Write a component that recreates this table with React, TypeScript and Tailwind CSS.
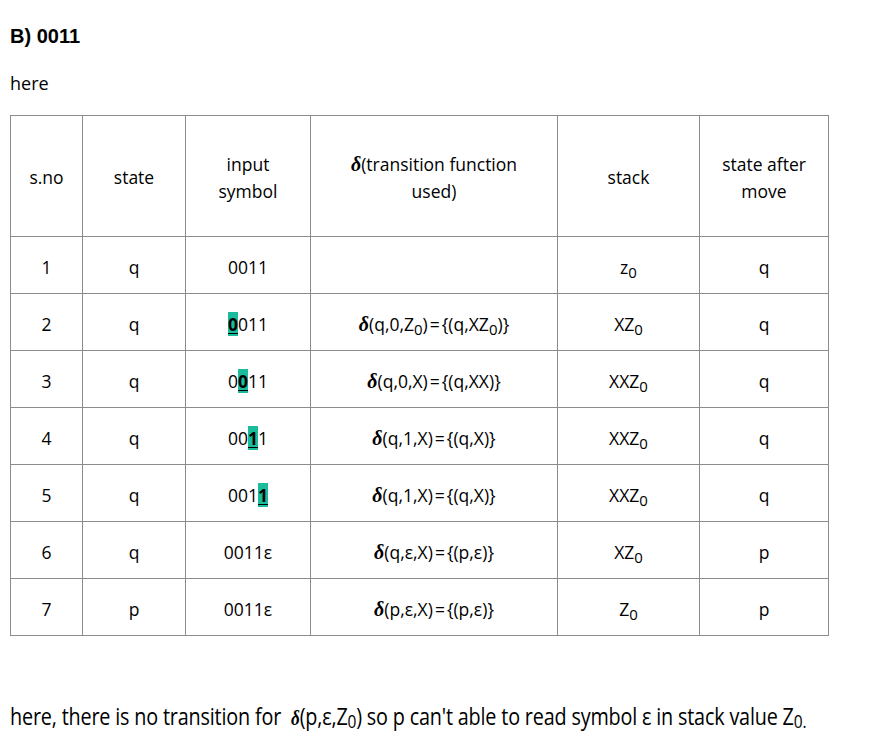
import * as React from "react";

const Delta = () => (
  <span className="font-['Liberation_Serif',serif] font-bold italic text-[20px]">δ</span>
);

const Sub = ({ children, big }: { children: React.ReactNode; big?: boolean }) => (
  <sub className={big ? "relative top-[3px] text-[18px]" : "relative top-[4px] text-[15px]"}>{children}</sub>
);

const Eq = () => <span className="mx-[2px]">=</span>;

const Hl = ({ children }: { children: React.ReactNode }) => (
  <span className="bg-[#1abc9c] font-bold underline underline-offset-2">{children}</span>
);

type Row = {
  no: string;
  state: string;
  input: React.ReactNode;
  fn: React.ReactNode;
  stack: React.ReactNode;
  after: string;
};

const rows: Row[] = [
  { no: "1", state: "q", input: "0011", fn: null, stack: <>z<Sub>0</Sub></>, after: "q" },
  {
    no: "2",
    state: "q",
    input: <><Hl>0</Hl>011</>,
    fn: <><Delta />(q,0,Z<Sub>0</Sub>)<Eq />{"{"}(q,XZ<Sub>0</Sub>){"}"}</>,
    stack: <>XZ<Sub>0</Sub></>,
    after: "q",
  },
  {
    no: "3",
    state: "q",
    input: <>0<Hl>0</Hl>11</>,
    fn: <><Delta />(q,0,X)<Eq />{"{"}(q,XX){"}"}</>,
    stack: <>XXZ<Sub>0</Sub></>,
    after: "q",
  },
  {
    no: "4",
    state: "q",
    input: <>00<Hl>1</Hl>1</>,
    fn: <><Delta />(q,1,X)<Eq />{"{"}(q,X){"}"}</>,
    stack: <>XXZ<Sub>0</Sub></>,
    after: "q",
  },
  {
    no: "5",
    state: "q",
    input: <>001<Hl>1</Hl></>,
    fn: <><Delta />(q,1,X)<Eq />{"{"}(q,X){"}"}</>,
    stack: <>XXZ<Sub>0</Sub></>,
    after: "q",
  },
  {
    no: "6",
    state: "q",
    input: "0011ε",
    fn: <><Delta />(q,ε,X)<Eq />{"{"}(p,ε){"}"}</>,
    stack: <>XZ<Sub>0</Sub></>,
    after: "p",
  },
  {
    no: "7",
    state: "p",
    input: "0011ε",
    fn: <><Delta />(p,ε,X)<Eq />{"{"}(p,ε){"}"}</>,
    stack: <>Z<Sub>0</Sub></>,
    after: "p",
  },
];

const cell = "border border-[#8c8c8c] text-center align-middle p-0";

export default function App() {
  return (
    <div className="min-h-[735px] w-[877px] bg-white px-[10px] pt-[23px] text-[18px] text-black font-['Open_Sans',sans-serif]">
      <h2 className="font-['Liberation_Sans',sans-serif] text-[20px] font-bold leading-[26px]">B) 0011</h2>
      <p className="mt-[21px] leading-[26px]">here</p>

      <table className="mt-[19px] border-collapse text-[17.5px] leading-[27px]">
        <colgroup>
          <col className="w-[72px]" />
          <col className="w-[103px]" />
          <col className="w-[125px]" />
          <col className="w-[247px]" />
          <col className="w-[142px]" />
          <col className="w-[129px]" />
        </colgroup>
        <thead className="font-normal">
          <tr className="h-[121px]">
            <td className={cell}><div className="pt-[3px]">s.no</div></td>
            <td className={cell}><div className="pt-[3px]">state</div></td>
            <td className={cell}><div className="pt-[3px]">input<br />symbol</div></td>
            <td className={cell}><div className="pt-[3px]"><Delta />(transition function<br />used)</div></td>
            <td className={cell}><div className="pt-[3px]">stack</div></td>
            <td className={cell}><div className="pt-[3px]">state after<br />move</div></td>
          </tr>
        </thead>
        <tbody>
          {rows.map((r) => (
            <tr key={r.no} className="h-[57px]">
              <td className={cell}><div className="pt-[4px]">{r.no}</div></td>
              <td className={cell}><div className="pt-[4px]">{r.state}</div></td>
              <td className={cell}><div className="pt-[4px]">{r.input}</div></td>
              <td className={cell}><div className="pt-[4px]">{r.fn}</div></td>
              <td className={cell}><div className="pt-[4px]">{r.stack}</div></td>
              <td className={cell}><div className="pt-[4px]">{r.after}</div></td>
            </tr>
          ))}
        </tbody>
      </table>

      <p className="mt-[66px] origin-left scale-x-[0.86] whitespace-nowrap text-[23px] leading-[28px] tracking-[-0.2px]">
        here, there is no transition for&nbsp;&nbsp;<Delta />(p,ε,Z<Sub big>0</Sub>) so p can't able to read symbol ε in stack value Z<Sub big>0.</Sub>
      </p>
    </div>
  );
}
